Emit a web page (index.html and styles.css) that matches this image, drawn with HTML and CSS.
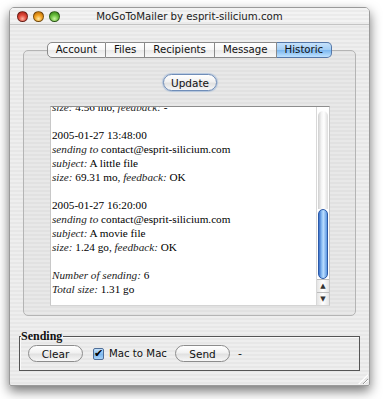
FILE: index.html
```html
<!DOCTYPE html>
<html lang="en">
<head>
  <meta charset="UTF-8" />
  <title>MoGoToMailer</title>
  <link rel="stylesheet" href="styles.css">
</head>
<body>

  <div class="window">
    <!-- Title bar -->
    <div class="titlebar">
      <div class="lights">
        <span class="light red"></span>
        <span class="light yellow"></span>
        <span class="light green"></span>
      </div>
      <div class="title">MoGoToMailer by esprit-silicium.com</div>
    </div>

    <div class="content">
      <div class="tabview">
        <div class="tabs">
          <div class="tab">Account</div>
          <div class="tab">Files</div>
          <div class="tab">Recipients</div>
          <div class="tab">Message</div>
          <div class="tab selected">Historic</div>
        </div>

        <div class="pane">
          <button class="btn default">Update</button>

          <div class="textview">
            <div class="text">
              <p><i>size:</i> 4.56 mo, <i>feedback:</i> -</p>
              <p>&nbsp;</p>
              <p>2005-01-27 13:48:00</p>
              <p><i>sending to</i> contact@esprit-silicium.com</p>
              <p><i>subject:</i> A little file</p>
              <p><i>size:</i> 69.31 mo, <i>feedback:</i> OK</p>
              <p>&nbsp;</p>
              <p>2005-01-27 16:20:00</p>
              <p><i>sending to</i> contact@esprit-silicium.com</p>
              <p><i>subject:</i> A movie file</p>
              <p><i>size:</i> 1.24 go, <i>feedback:</i> OK</p>
              <p>&nbsp;</p>
              <p><i>Number of sending:</i> 6</p>
              <p><i>Total size:</i> 1.31 go</p>
            </div>
            <div class="scrollbar">
              <div class="track">
                <div class="thumb"></div>
              </div>
              <div class="arrow">&#9650;</div>
              <div class="arrow">&#9660;</div>
            </div>
          </div>
        </div>
      </div>

      <!-- Sending group -->
      <fieldset class="sending">
        <legend>Sending</legend>
        <button class="btn">Clear</button>
        <label class="check"><span class="box">&#10004;</span>Mac to Mac</label>
        <button class="btn">Send</button>
        <span class="dash">-</span>
      </fieldset>

      <div class="grip"></div>
    </div>
  </div>

</body>
</html>
```

FILE: styles.css
```css
* {
  box-sizing: border-box;
  margin: 0;
  padding: 0;
}

body {
  width: 383px;
  height: 399px;
  background: #fff;
  padding: 7px 13px 0 9px;
  font-family: "DejaVu Sans", "Liberation Sans", sans-serif;
  font-size: 10px;
  color: #111;
  overflow: hidden;
}

.window {
  width: 361px;
  height: 379px;
  border-radius: 5px 5px 2px 2px;
  border: 1px solid #9a9a9a;
  box-shadow: 0 5px 12px rgba(0, 0, 0, 0.55);
  background: repeating-linear-gradient(to bottom, #eeeeee 0 2px, #e7e7e7 2px 4px);
  overflow: hidden;
}

/* ---------- title bar ---------- */

.titlebar {
  height: 17px;
  display: grid;
  grid-template-columns: 1fr auto 1fr;
  align-items: center;
  border-bottom: 1px solid #c4c4c4;
  background: repeating-linear-gradient(to bottom, #f3f3f3 0 2px, #ebebeb 2px 4px);
}

.lights {
  display: flex;
  gap: 5px;
  padding-left: 7px;
}

.light {
  width: 11px;
  height: 11px;
  border-radius: 50%;
  border: 1px solid rgba(0, 0, 0, 0.45);
}

.red {
  background: radial-gradient(circle at 50% 75%, #ffb0a0 0, #e04a3a 45%, #a31a10 100%);
}

.yellow {
  background: radial-gradient(circle at 50% 75%, #ffe7a0 0, #f0a020 45%, #b06000 100%);
}

.green {
  background: radial-gradient(circle at 50% 75%, #c8f5a0 0, #6cc040 45%, #2e7a10 100%);
}

.title {
  font-size: 10.2px;
  color: #222;
}

/* ---------- content ---------- */

.content {
  position: relative;
  height: 360px;
  padding: 17px 13px 0 13px;
}

.tabs {
  position: relative;
  z-index: 1;
  display: flex;
  justify-content: center;
  height: 16px;
}

.tab {
  height: 16px;
  line-height: 14px;
  padding: 0 8px;
  font-size: 10.2px;
  border: 1px solid #8a8a8a;
  border-left: none;
  background: linear-gradient(to bottom, #ffffff 0%, #f6f6f6 50%, #e9e9e9 51%, #f9f9f9 100%);
}

.tab:first-child {
  border-left: 1px solid #8a8a8a;
  border-radius: 5px 0 0 5px;
}

.tab:last-child {
  border-radius: 0 5px 5px 0;
}

.tab.selected {
  border-color: #5577a8;
  background: linear-gradient(to bottom, #c6e2fb 0%, #a2cdf4 50%, #79b6ef 51%, #bfe2ff 100%);
}

.pane {
  margin-top: -8px;
  height: 266px;
  border: 1px solid #b4b4b4;
  border-radius: 5px;
  background: rgba(0, 0, 0, 0.025);
  padding: 23px 25px 0 26px;
  display: flex;
  flex-direction: column;
  align-items: center;
}

/* ---------- buttons ---------- */

.btn {
  height: 17px;
  border: 1px solid #8c8c8c;
  border-radius: 9px;
  font-family: "DejaVu Sans", "Liberation Sans", sans-serif;
  font-size: 10.5px;
  color: #111;
  background: linear-gradient(to bottom, #ffffff 0%, #f1f1f1 45%, #e1e1e1 55%, #f7f7f7 100%);
  width: 55px;
}

.btn.default {
  width: 54px;
  border-color: #6f8db8;
  box-shadow: 0 0 1px 1px rgba(120, 160, 210, 0.45);
}

/* ---------- text view ---------- */

.textview {
  margin-top: 15px;
  width: 280px;
  height: 200px;
  display: flex;
  background: #fff;
  border-top: 1px solid #8d8d8d;
  border-left: 1px solid #c8c8c8;
  border-right: 1px solid #c8c8c8;
  border-bottom: 1px solid #d4d4d4;
  overflow: hidden;
}

.text {
  flex: 1;
  margin-top: -7px;
  padding-left: 1px;
  font-family: "Liberation Serif", serif;
  font-size: 11.2px;
  line-height: 14px;
  color: #000;
  white-space: nowrap;
}

.text i {
  color: #222;
}

.scrollbar {
  width: 13px;
  display: flex;
  flex-direction: column;
  border-left: 1px solid #d8d8d8;
}

.track {
  flex: 1;
  display: flex;
  flex-direction: column;
  padding: 4px 0 0 0;
  background: #fff;
}

.track::before {
  content: "";
  display: block;
  flex: 1;
  margin: 0 1px;
  border-radius: 6px 6px 0 0;
  background: linear-gradient(to right, #cfcfcf 0%, #f4f4f4 35%, #ffffff 60%, #dcdcdc 100%);
}

.thumb {
  height: 70px;
  margin: 0 1px;
  border-radius: 6px;
  border: 1px solid #2b5aa8;
  background: linear-gradient(to right, #3a6fc8 0%, #8ec1f5 35%, #b9dcff 55%, #5b97e0 100%);
}

.arrow {
  height: 13px;
  font-size: 7px;
  line-height: 12px;
  text-align: center;
  color: #333;
  border-top: 1px solid #bcbcbc;
  background: linear-gradient(to right, #e4e4e4, #ffffff 50%, #e4e4e4);
}

/* ---------- sending group ---------- */

.sending {
  margin: 13px -4px 0 -4px;
  height: 42px;
  border: 1px solid #555;
  box-shadow: 1px 1px 0 #fafafa inset;
  padding: 2px 8px 8px 8px;
  display: flex;
  align-items: center;
}

.sending legend {
  margin-left: -7px;
  padding: 0 1px 0 0;
  font-family: "Liberation Serif", serif;
  font-weight: bold;
  font-size: 12px;
  line-height: 14px;
  color: #111;
}

.check {
  display: flex;
  align-items: center;
  gap: 5px;
  margin: 0 8px 0 10px;
  font-size: 10.2px;
}

.box {
  width: 11px;
  height: 12px;
  border: 1px solid #4f6e98;
  border-radius: 2px;
  background: linear-gradient(to bottom, #c5e2fb, #7db8ee 55%, #a9d4fa);
  font-size: 11px;
  line-height: 10px;
  text-align: center;
  color: #000;
}

.dash {
  margin-left: 8px;
  font-size: 11px;
}

.grip {
  position: absolute;
  right: 1px;
  bottom: 1px;
  width: 10px;
  height: 10px;
  background: repeating-linear-gradient(135deg, transparent 0 2px, #9a9a9a 2px 3px, #fff 3px 4px);
  clip-path: polygon(100% 0, 100% 100%, 0 100%);
}
```
